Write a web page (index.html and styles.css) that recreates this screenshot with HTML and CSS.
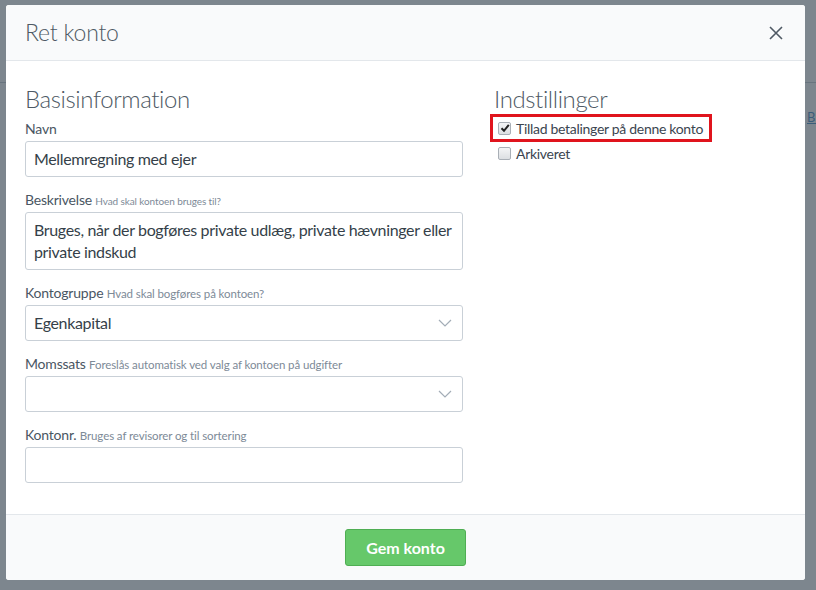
FILE: index.html
```html
<!DOCTYPE html>
<html lang="da">
<head>
  <meta charset="UTF-8" />
  <title>Ret konto</title>
  <link rel="stylesheet" href="styles.css">
</head>
<body>
  <div class="page">
    <div class="page-bar"></div>
    <div class="page-tab">B</div>
  </div>

  <div class="backdrop">
    <div class="modal">
      <div class="modal-header">
        <h1>Ret konto</h1>
        <svg class="close" width="14" height="14" viewBox="0 0 14 14">
          <path d="M1 1 L13 13 M13 1 L1 13" stroke="#4f5964" stroke-width="1.6" fill="none" />
        </svg>
      </div>

      <div class="modal-body">
        <div class="col">
          <h2>Basisinformation</h2>

          <div class="field">
            <label>Navn</label>
            <div class="input">Mellemregning med ejer</div>
          </div>

          <div class="field">
            <label>Beskrivelse <small class="tiny">Hvad skal kontoen bruges til?</small></label>
            <div class="input textarea">Bruges, når der bogføres private udlæg, private hævninger eller private indskud</div>
          </div>

          <div class="field">
            <label>Kontogruppe <small>Hvad skal bogføres på kontoen?</small></label>
            <div class="input select">
              <span>Egenkapital</span>
              <svg width="14" height="8" viewBox="0 0 14 8"><polyline points="1,1 7,7 13,1" fill="none" stroke="#a3adb7" stroke-width="1.2" /></svg>
            </div>
          </div>

          <div class="field">
            <label>Momssats <small>Foreslås automatisk ved valg af kontoen på udgifter</small></label>
            <div class="input select">
              <span></span>
              <svg width="14" height="8" viewBox="0 0 14 8"><polyline points="1,1 7,7 13,1" fill="none" stroke="#a3adb7" stroke-width="1.2" /></svg>
            </div>
          </div>

          <div class="field">
            <label>Kontonr. <small>Bruges af revisorer og til sortering</small></label>
            <div class="input"></div>
          </div>
        </div>

        <div class="col">
          <h2>Indstillinger</h2>
          <div class="check-row marked">
            <span class="box">
              <svg width="10" height="10" viewBox="0 0 10 10"><path d="M1.5 5.2 L4 7.8 L8.8 1.8" fill="none" stroke="#222" stroke-width="2" /></svg>
            </span>
            Tillad betalinger på denne konto
          </div>
          <div class="check-row">
            <span class="box"></span>
            Arkiveret
          </div>
        </div>
      </div>

      <div class="modal-footer">
        <button class="btn-green">Gem konto</button>
      </div>
    </div>
  </div>
</body>
</html>
```

FILE: styles.css
```css
body {
  margin: 0;
  width: 816px;
  height: 590px;
  overflow: hidden;
  font-family: Lato, 'Liberation Sans', sans-serif;
  background: #fff;
  position: relative;
}

/* page behind the dialog */
.page {
  height: 590px;
  background: #ffffff;
}

.page-bar {
  height: 82px;
  border-bottom: 1px solid #b8c1ca;
}

.page-tab {
  margin-left: 807px;
  padding-top: 26px;
  height: 14px;
  font-size: 13px;
  color: #1f73b7;
  border-bottom: 1px solid #1f73b7;
}

.backdrop {
  position: absolute;
  left: 0;
  top: 0;
  width: 816px;
  height: 590px;
  background: rgba(70, 82, 94, 0.7);
  padding: 5px 0 0 6px;
  box-sizing: border-box;
}

.modal {
  width: 799px;
  height: 575px;
  background: white;
  border-radius: 3px;
  display: flex;
  flex-direction: column;
  overflow: hidden;
}

.modal-header {
  height: 55px;
  border-bottom: 1px solid #e3e7eb;
  background: #f9fafb;
  display: flex;
  align-items: center;
  justify-content: space-between;
  padding: 0 22px 0 19px;
}

.modal-header h1 {
  margin: 0 0 1px 0;
  font-size: 23px;
  font-weight: 300;
  color: #4e5964;
  letter-spacing: -0.2px;
}

.modal-body {
  flex: 1;
  display: flex;
  gap: 31px;
  padding: 23px 19px 0 19px;
}

.col {
  width: 438px;
}

.col + .col {
  width: 292px;
}

h2 {
  margin: 0;
  height: 30px;
  line-height: 30px;
  font-size: 24px;
  font-weight: 300;
  color: #4e5964;
  letter-spacing: -0.4px;
}

.field {
  margin-top: 6px;
  margin-bottom: 14px;
}

label {
  display: block;
  height: 18px;
  line-height: 18px;
  font-size: 14px;
  color: #4a5663;
  margin-bottom: 3px;
  letter-spacing: -0.2px;
}

label small {
  font-size: 11.5px;
  color: #7d8a97;
  letter-spacing: -0.1px;
}

label small.tiny {
  font-size: 10px;
}

.input {
  height: 36px;
  box-sizing: border-box;
  border: 1px solid #c9d0d7;
  border-radius: 3px;
  padding: 0 8px;
  font-size: 16px;
  line-height: 34px;
  color: #353f49;
  letter-spacing: -0.35px;
}

.textarea {
  height: 58px;
  line-height: 22px;
  padding-top: 6px;
}

.select {
  display: flex;
  align-items: center;
  justify-content: space-between;
  padding-right: 10px;
}

.check-row {
  display: flex;
  align-items: center;
  gap: 5px;
  height: 24px;
  font-size: 14px;
  color: #3b4550;
  padding-left: 4px;
  white-space: nowrap;
  letter-spacing: -0.3px;
}

.marked {
  width: 220px;
  box-sizing: border-box;
  outline: 3px solid #e0141d;
  outline-offset: -2px;
  margin: 1px 0 0 -3px;
  padding-left: 7px;
  height: 26px;
}

.box {
  width: 11px;
  height: 11px;
  border: 1px solid #a9afb6;
  border-radius: 2px;
  background: linear-gradient(#f4f5f6, #dcdfe2);
  display: flex;
  align-items: center;
  justify-content: center;
}

.modal-footer {
  height: 65px;
  border-top: 1px solid #e3e7eb;
  background: #f9fafb;
  display: flex;
  align-items: center;
  justify-content: center;
}

.btn-green {
  width: 121px;
  height: 37px;
  background: #66c86a;
  border: 1px solid #4fae53;
  border-radius: 3px;
  color: white;
  font-family: Lato, 'Liberation Sans', sans-serif;
  font-size: 16px;
  font-weight: bold;
}
```
